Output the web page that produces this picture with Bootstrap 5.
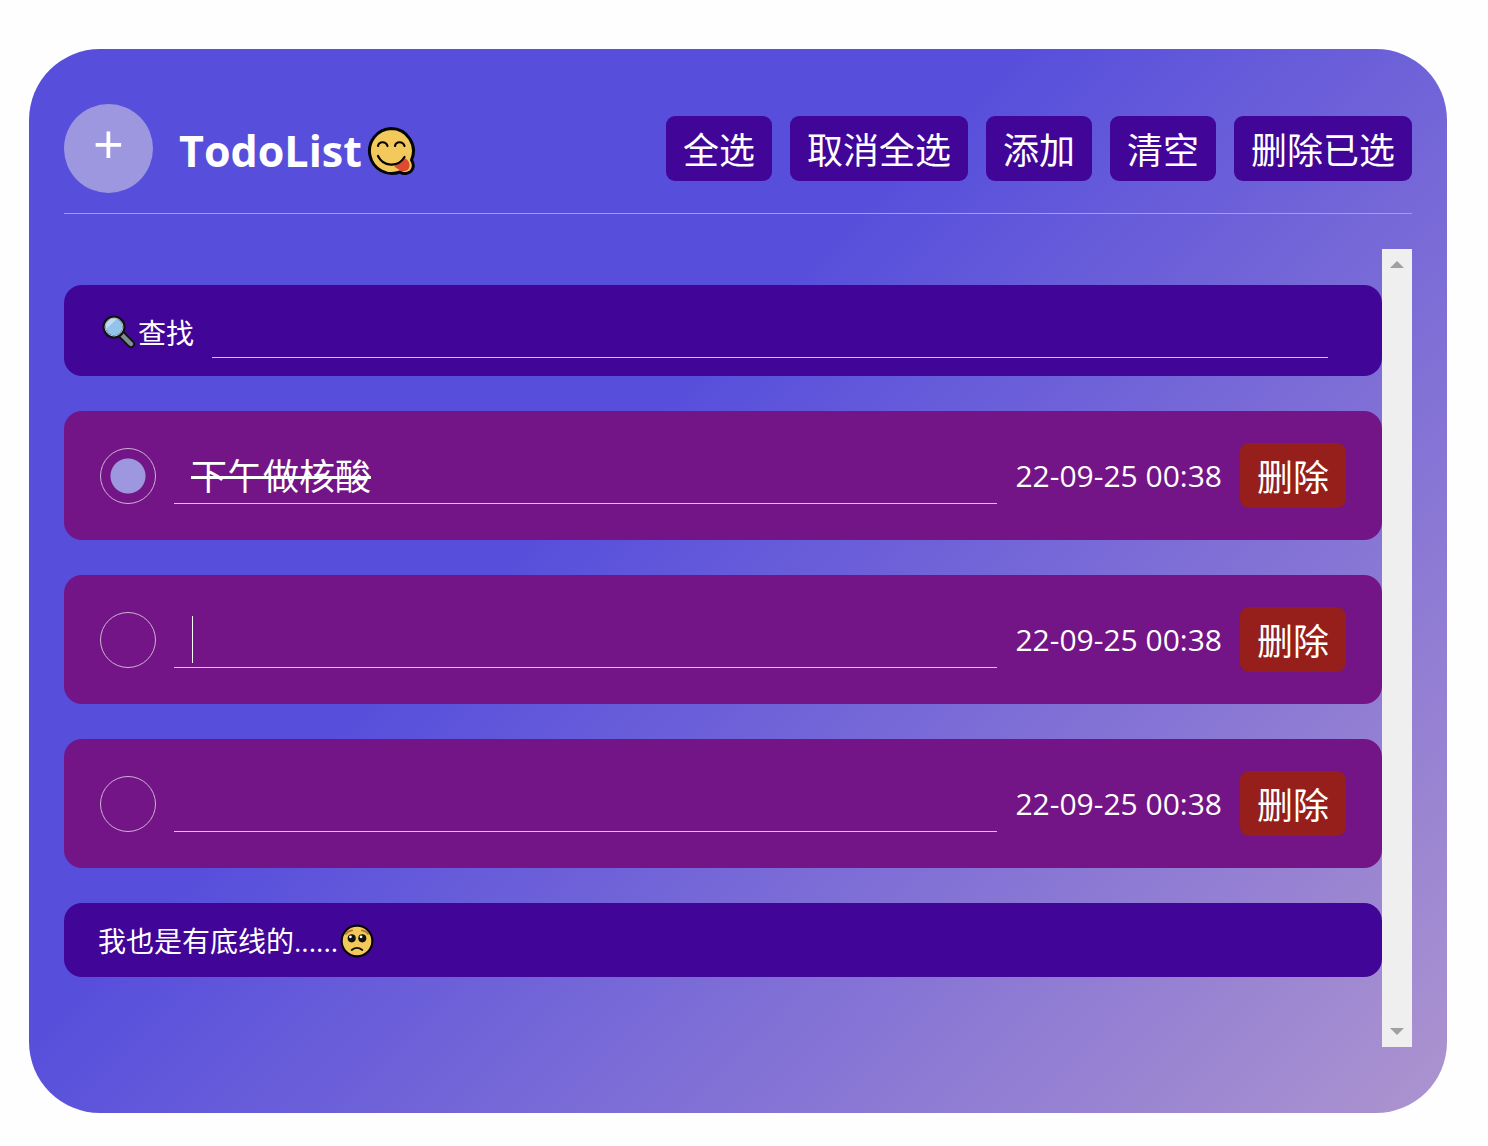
<!DOCTYPE html>
<html lang="zh-CN">
<head>
<meta charset="utf-8">
<meta name="viewport" content="width=device-width, initial-scale=1">
<title>TodoList</title>
<link href="https://cdn.jsdelivr.net/npm/bootstrap@5.3.0/dist/css/bootstrap.min.css" rel="stylesheet">
<style>
  body { background: #fefefe; color: #fff; font-family: "Open Sans", "Noto Sans CJK SC", sans-serif; }
  .todo-app { margin: 49px 41px 32px 29px; padding: 55px 35px 66px; border-radius: 71px;
    background: linear-gradient(135deg, #574fdc 40%, #ad94cf 100%); }
  .todo-head { padding-bottom: 20px; border-bottom: 1px solid #a49fdc; margin-bottom: 35px; }
  .add-round { width: 89px; height: 89px; border: 0; background: #9c97df; color: #fff;
    font-size: 54px; font-weight: 500; line-height: 68px; padding: 0 0 12px; }
  .todo-title { font-size: 43px; line-height: 60px; font-weight: 700; margin: 0 0 0 26px; padding-top: 4px; }
  .face-lg { width: 50px; height: 50px; margin-left: 4px; }
  .row-gap { gap: 18px; }
  .act { height: 65px; padding: 4px 17px 0; border: 0; border-radius: 9px; color: #fff;
    background: #410598; font-size: 36px; line-height: 60px; white-space: nowrap; }
  .act:hover { color: #fff; background: #35047d; }
  .act-del { background: #961f1b; }
  .act-del:hover { background: #7d1815; }
  .todo-scroll { min-height: 798px; }
  .todo-list { gap: 35px; padding: 36px 0; }
  .bar { background: #410598; border-radius: 18px; font-size: 28px; line-height: 40px; }
  .bar-search { padding: 17px 54px 18px 36px; }
  .bar-search label { padding-top: 5px; }
  .bar-end { padding: 18px 34px 16px; }
  .glass { width: 36px; height: 36px; margin-right: 2px; }
  .face-sm { width: 36px; height: 36px; margin-left: 1px; }
  .todo-item { background: #731586; border-radius: 18px; padding: 32px 36px; }
  .line-input { width: 100%; border: 0; border-bottom: 1px solid #d5c4dd; background: transparent;
    color: #fff; outline: 0; height: 56px; padding: 0 17px 2px; font-size: 36px; line-height: 50px; }
  .done { text-decoration: line-through; text-decoration-thickness: 3px; }
  .tick { appearance: none; width: 56px; height: 56px; border: 1px solid #cdb3d3; border-radius: 50%; margin: 0; }
  .tick:checked { background: radial-gradient(circle, #9c97df 17px, transparent 18px); }
  .when { font-size: 30px; line-height: 40px; white-space: nowrap; }
  .caret { width: 1px; height: 47px; left: 18px; top: 4px; background: #fff; }
  .track { width: 30px; background: #efefef; padding: 12px 0; }
</style>
<script src="https://cdn.jsdelivr.net/npm/bootstrap@5.3.0/dist/js/bootstrap.bundle.min.js"></script>
</head>
<body>
<main class="todo-app">
  <header class="todo-head d-flex align-items-center justify-content-between">
    <div class="d-flex align-items-center">
      <button class="add-round rounded-circle" type="button" aria-label="添加">+</button>
      <h1 class="todo-title d-flex align-items-center"><span>TodoList</span>
        <svg class="face-lg" viewBox="0 0 50 50" role="img" aria-label="yum">
          <path d="M25 2.500a22.500 22.500 0 0 1 20.500 31.500q2.500 4 1.500 7.500c-1.500 6-9 7.500-13 4.500A22.500 22.500 0 1 1 25 2.500z" fill="#f3c95c" stroke="#050505" stroke-width="3" stroke-linejoin="round"/>
          <path d="M28 40c4-1 8-4 10-8 4 1 6 5 5.500 8.500-1 5-7 6-10 3.500-2-1.500-3.500-2-5.500-4z" fill="#dc4a30"/>
          <path d="M12 20c1-5 8-5 9.500 0M29 20c1-5 8-5 9.500 0M12 30c5 10.500 20 12 26.500 1" fill="none" stroke="#050505" stroke-width="2.200" stroke-linecap="round"/>
        </svg>
      </h1>
    </div>
    <div class="d-flex row-gap">
      <button class="act" type="button">全选</button>
      <button class="act" type="button">取消全选</button>
      <button class="act" type="button">添加</button>
      <button class="act" type="button">清空</button>
      <button class="act" type="button">删除已选</button>
    </div>
  </header>

  <div class="todo-scroll d-flex">
    <div class="todo-list d-flex flex-column flex-grow-1">
      <div class="bar bar-search d-flex align-items-center row-gap">
        <label for="q" class="d-flex align-items-center text-nowrap">
          <svg class="glass" viewBox="0 0 36 36" aria-hidden="true">
            <path d="M22 20l9 9" stroke="#111" stroke-width="8" stroke-linecap="round"/>
            <path d="M22 20l9 9" stroke="#7e8f93" stroke-width="4.500" stroke-linecap="round"/>
            <circle cx="14" cy="12" r="10" fill="#93c3eb" stroke="#111" stroke-width="3"/>
            <path d="M6 14L17 4q-4-2-8 1t-3 9z" fill="#c0dcf2"/>
            <circle cx="14" cy="12" r="9" fill="none" stroke="#b9c6c8" stroke-width="1"/>
          </svg>查找</label>
        <input id="q" class="line-input" type="text">
      </div>

      <div class="todo-item d-flex align-items-center row-gap">
        <input class="tick flex-shrink-0" type="checkbox" checked aria-label="完成 1">
        <div class="flex-grow-1"><input class="line-input done" type="text" value="下午做核酸" aria-label="事项 1"></div>
        <span class="when">22-09-25 00:38</span>
        <button class="act act-del" type="button">删除</button>
      </div>
      <div class="todo-item d-flex align-items-center row-gap">
        <input class="tick flex-shrink-0" type="checkbox" aria-label="完成 2">
        <div class="flex-grow-1 position-relative"><input class="line-input" type="text" aria-label="事项 2"><span class="caret position-absolute"></span></div>
        <span class="when">22-09-25 00:38</span>
        <button class="act act-del" type="button">删除</button>
      </div>
      <div class="todo-item d-flex align-items-center row-gap">
        <input class="tick flex-shrink-0" type="checkbox" aria-label="完成 3">
        <div class="flex-grow-1"><input class="line-input" type="text" aria-label="事项 3"></div>
        <span class="when">22-09-25 00:38</span>
        <button class="act act-del" type="button">删除</button>
      </div>

      <div class="bar bar-end d-flex align-items-center"><span>我也是有底线的......</span>
        <svg class="face-sm" viewBox="0 0 34 34" role="img" aria-label="pleading">
          <circle cx="17" cy="17" r="14.500" fill="#f3c95c" stroke="#050505" stroke-width="2"/>
          <circle cx="12" cy="14.500" r="3.800" fill="#111"/><circle cx="22" cy="14.500" r="3.800" fill="#111"/>
          <circle cx="10.800" cy="13" r="1.300" fill="#fff"/><circle cx="20.800" cy="13" r="1.300" fill="#fff"/>
          <path d="M6.500 10.500q2-3 6-3.500M27.500 10.500q-2-3-6-3.500" fill="none" stroke="#b9722c" stroke-width="1.500" stroke-linecap="round"/>
          <path d="M12 25.500q5-4 10 0" fill="none" stroke="#111" stroke-width="1.800" stroke-linecap="round"/>
        </svg>
      </div>
    </div>
    <div class="track d-flex flex-column justify-content-between align-items-center flex-shrink-0" aria-hidden="true">
      <svg width="14" height="7" viewBox="0 0 14 7"><path d="M0 7h14L7 0z" fill="#a0a0a0"/></svg>
      <svg width="14" height="7" viewBox="0 0 14 7"><path d="M0 0h14L7 7z" fill="#a0a0a0"/></svg>
    </div>
  </div>
</main>
</body>
</html>
